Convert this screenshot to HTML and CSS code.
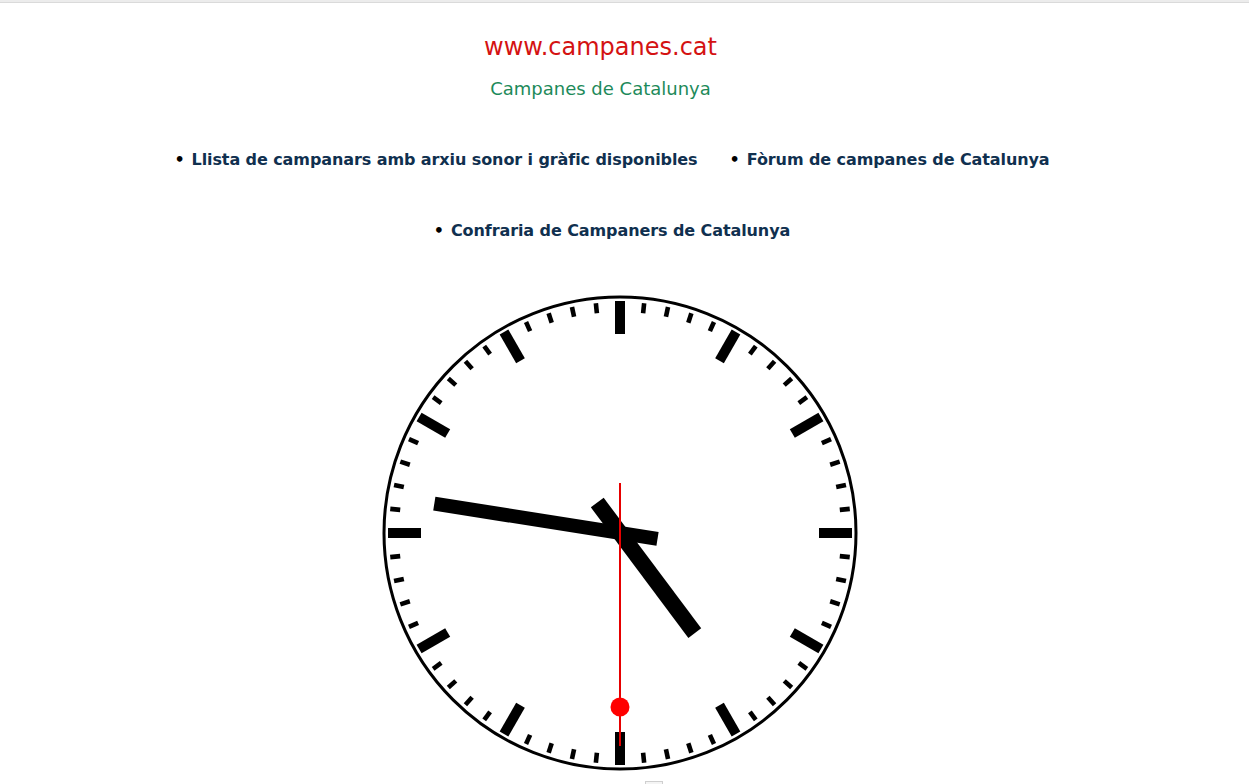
FILE: index.html
```html
<!DOCTYPE html>
<html lang="ca">
<head>
<meta charset="utf-8">
<title>Campanes de Catalunya</title>
<link rel="stylesheet" href="styles.css">
</head>
<body>
<div class="topbar"></div>
<header class="header">
  <h1 class="site-title">www.campanes.cat</h1>
  <p class="site-subtitle">Campanes de Catalunya</p>
</header>
<ul class="links">
  <li class="link-item"><span class="bullet">•</span><a href="#">Llista de campanars amb arxiu sonor i gràfic disponibles</a></li>
  <li class="link-item"><span class="bullet">•</span><a href="#">Fòrum de campanes de Catalunya</a></li>
  <li class="link-item"><span class="bullet">•</span><a href="#">Confraria de Campaners de Catalunya</a></li>
</ul>
<div class="clock-wrap">
  <svg class="clock" viewBox="-240 -240 480 480" width="480" height="480">
    <defs>
      <rect id="hm" x="-5" y="-232" width="10" height="33" fill="#000"/>
      <rect id="mm" x="-2.3" y="-231" width="4.6" height="10" fill="#000"/>
      <g id="m4">
        <use href="#mm" transform="rotate(6)"/>
        <use href="#mm" transform="rotate(12)"/>
        <use href="#mm" transform="rotate(18)"/>
        <use href="#mm" transform="rotate(24)"/>
      </g>
    </defs>
    <circle cx="0" cy="0" r="236" fill="#fff" stroke="#000" stroke-width="3"/>
    <g>
      <use href="#hm" transform="rotate(0)"/>
      <use href="#hm" transform="rotate(30)"/>
      <use href="#hm" transform="rotate(60)"/>
      <use href="#hm" transform="rotate(90)"/>
      <use href="#hm" transform="rotate(120)"/>
      <use href="#hm" transform="rotate(150)"/>
      <use href="#hm" transform="rotate(180)"/>
      <use href="#hm" transform="rotate(210)"/>
      <use href="#hm" transform="rotate(240)"/>
      <use href="#hm" transform="rotate(270)"/>
      <use href="#hm" transform="rotate(300)"/>
      <use href="#hm" transform="rotate(330)"/>
    </g>
    <g>
      <use href="#m4" transform="rotate(0)"/>
      <use href="#m4" transform="rotate(30)"/>
      <use href="#m4" transform="rotate(60)"/>
      <use href="#m4" transform="rotate(90)"/>
      <use href="#m4" transform="rotate(120)"/>
      <use href="#m4" transform="rotate(150)"/>
      <use href="#m4" transform="rotate(180)"/>
      <use href="#m4" transform="rotate(210)"/>
      <use href="#m4" transform="rotate(240)"/>
      <use href="#m4" transform="rotate(270)"/>
      <use href="#m4" transform="rotate(300)"/>
      <use href="#m4" transform="rotate(330)"/>
    </g>
    <rect x="-8" y="-125" width="16" height="163" fill="#000" transform="rotate(143.25)"/>
    <rect x="-7" y="-188" width="14" height="226" fill="#000" transform="rotate(279)"/>
    <g transform="rotate(180)">
      <rect x="-1" y="-213" width="2" height="263" fill="#e60000"/>
      <circle cx="0" cy="-174" r="9.5" fill="#f00"/>
    </g>
  </svg>
</div>
<div class="footer-box"></div>
</body>
</html>
```

FILE: styles.css
```css
html, body {
  margin: 0;
  padding: 0;
  background: #fff;
  height: 784px;
  overflow: hidden;
}
body {
  font-family: "DejaVu Sans", Verdana, sans-serif;
}
.topbar {
  height: 2px;
  background: #ececec;
  border-bottom: 1px solid #dadada;
}
.header {
  width: 1201px;
  text-align: center;
  padding-top: 30px;
}
.site-title {
  margin: 0;
  font-size: 24px;
  line-height: 28px;
  font-weight: normal;
  color: #d41212;
}
.site-subtitle {
  margin: 17px 0 0;
  font-size: 18px;
  line-height: 21px;
  color: #1d8a5a;
}
.links {
  list-style: none;
  margin: 0;
  padding: 51px 0 0;
  width: 900px;
  margin-left: 162px;
  display: flex;
  flex-wrap: wrap;
  justify-content: center;
  column-gap: 32px;
  row-gap: 52px;
}
.link-item {
  font-size: 16px;
  line-height: 19px;
  font-weight: bold;
  white-space: nowrap;
  letter-spacing: -0.09px;
}
.link-item a {
  color: #10304f;
  text-decoration: none;
}
.bullet {
  color: #000;
  margin-right: 7px;
}
.clock-wrap {
  margin-top: 53px;
  padding-left: 380px;
  height: 480px;
}
.clock {
  display: block;
}
.footer-box {
  margin-left: 645px;
  margin-top: 8px;
  width: 16px;
  height: 6px;
  border: 1px solid #cfcfcf;
  background: #f4f4f4;
}
```
